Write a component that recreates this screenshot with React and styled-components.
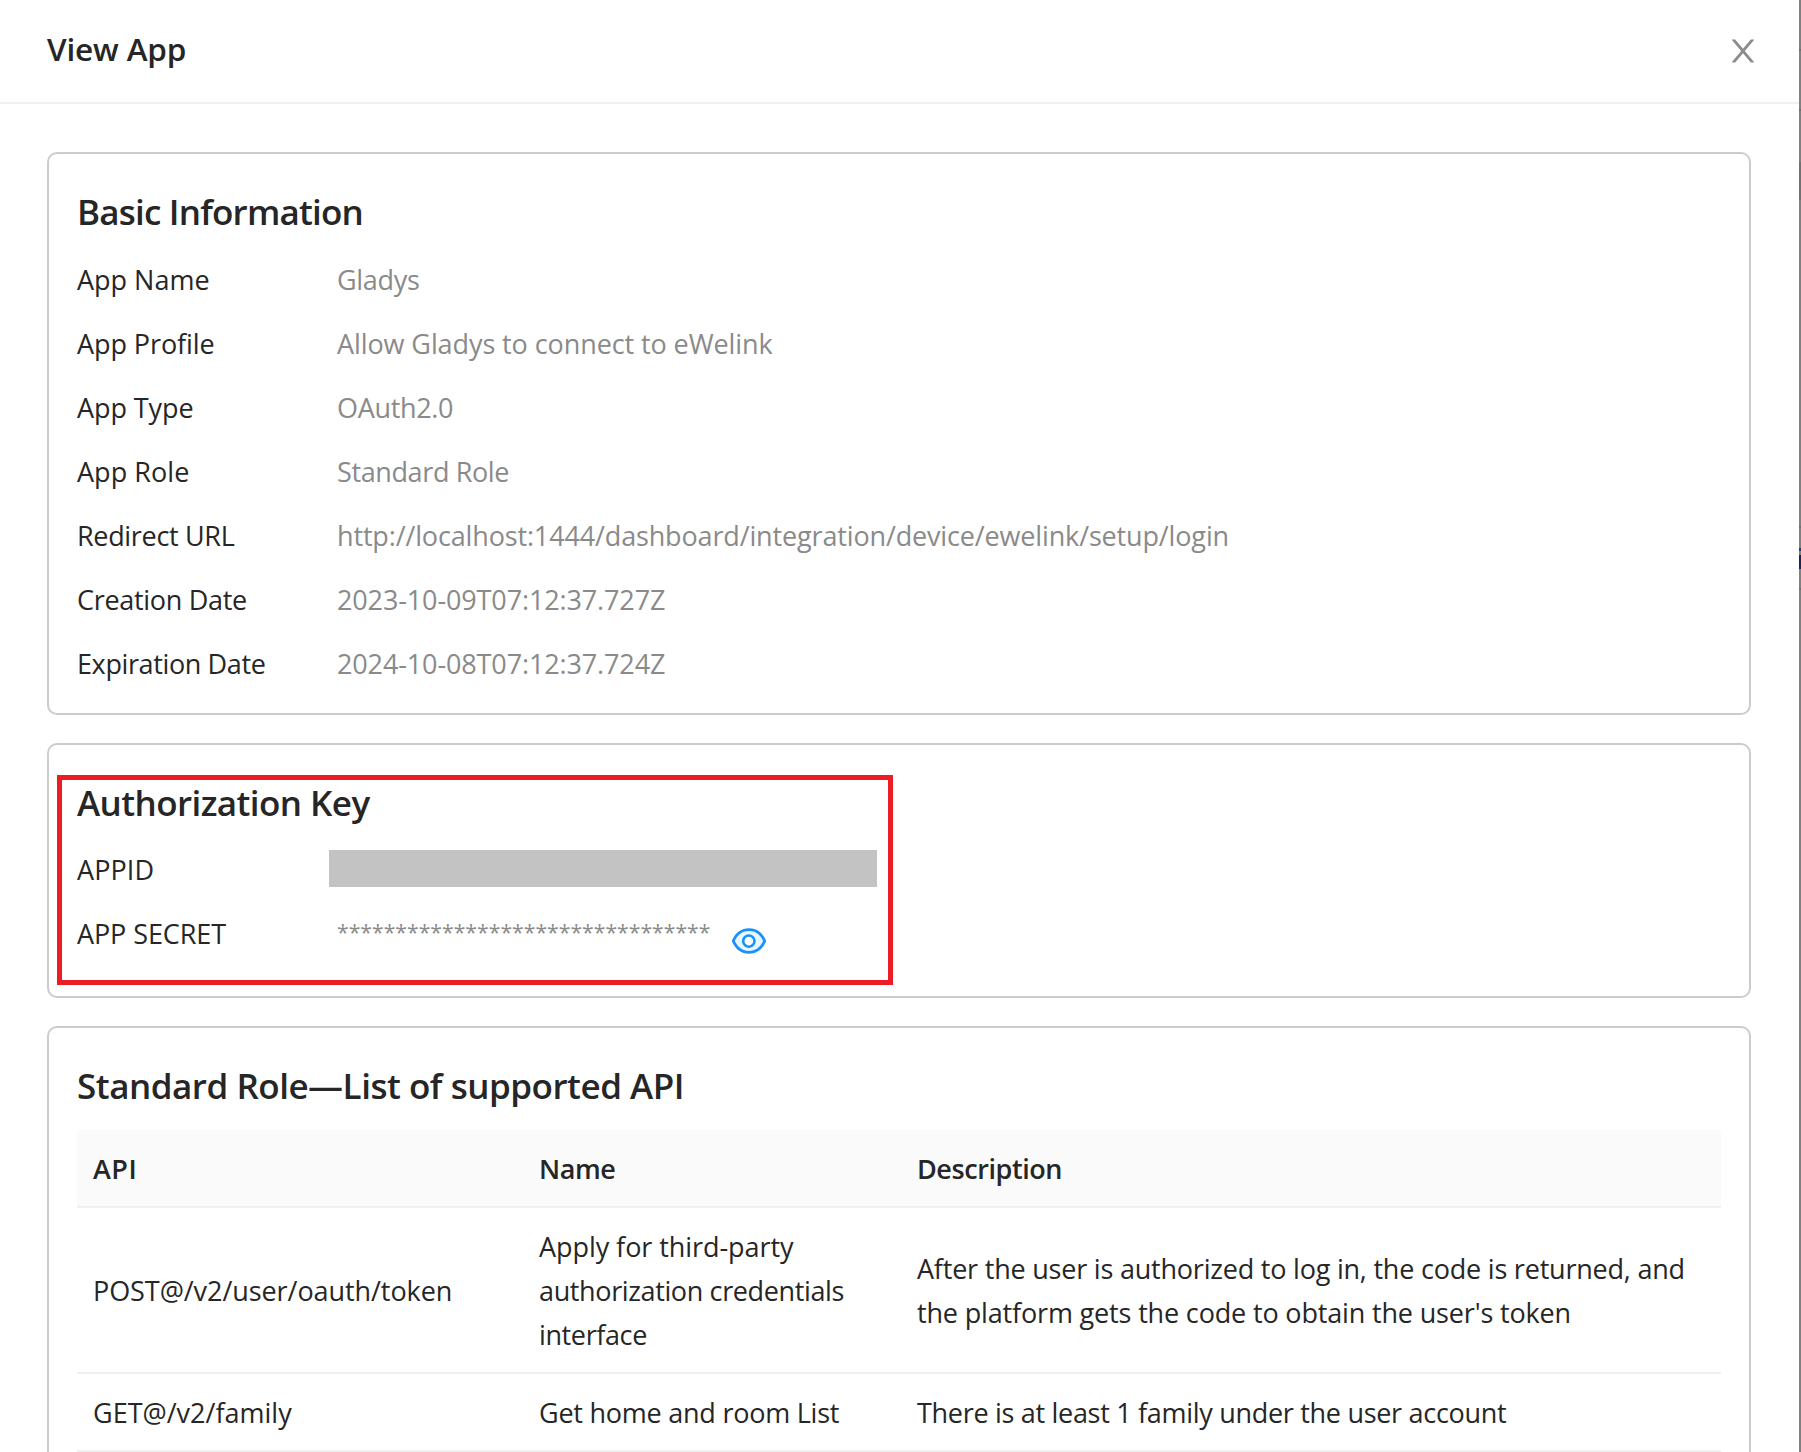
import React from "react";
import styled, { createGlobalStyle } from "styled-components";

const GlobalStyle = createGlobalStyle`
  *, *::before, *::after { box-sizing: border-box; }
  body {
    margin: 0;
    background: #fff;
    color: #262626;
    font-family: "Open Sans", "Noto Sans", sans-serif;
    font-size: 27px;
    line-height: 44px;
  }
`;

const Page = styled.div`
  display: flex;
  width: 100%;
  height: 1452px;
  overflow: hidden;
`;

const Drawer = styled.section`
  flex: 1;
  min-width: 0;
  display: flex;
  flex-direction: column;
  background: #fff;
`;

const Backdrop = styled.div`
  flex: none;
  width: 2px;
  background: linear-gradient(
    to bottom,
    #808080 0 49px, #6f6f6f 49px 51px,
    #808080 51px 109px, #6f6f6f 109px 111px,
    #808080 111px 162px, #717171 162px 200px,
    #808080 200px 526px, #717171 526px 528px,
    #808080 528px 548px, #1c4468 548px 551px,
    #808080 551px 555px, #1b2358 555px 569px,
    #808080 569px 588px, #717171 588px 590px,
    #808080 590px
  );
`;

const Header = styled.header`
  flex: none;
  display: flex;
  align-items: center;
  justify-content: space-between;
  height: 104px;
  padding: 0 38px 0 47px;
  border-bottom: 2px solid #f0f0f0;
`;

const Title = styled.h1`
  margin: 0;
  padding-bottom: 4px;
  font-size: 31.5px;
  font-weight: 600;
  letter-spacing: -0.15px;
`;

const CloseButton = styled.button`
  display: flex;
  padding: 0;
  border: 0;
  background: none;
  color: #8c8c8c;
`;

const Body = styled.main`
  display: flex;
  flex-direction: column;
  gap: 28px;
  padding: 48px 48px 0 47px;
`;

const Card = styled.section`
  position: relative;
  flex: none;
  height: ${(p) => p.$height}px;
  padding: 28px;
  border: 2px solid #ccc;
  border-radius: 10px;
`;

const Heading = styled.h2`
  margin: 0 0 ${(p) => p.$gap ?? 16}px;
  font-size: 35px;
  font-weight: 600;
  line-height: 59px;
  letter-spacing: ${(p) => p.$tracking}px;
`;

const Fields = styled.div`
  display: flex;
  flex-direction: column;
  gap: 20px;
`;

const Field = styled.div`
  display: flex;
  height: 44px;
`;

const Text = styled.span`
  display: block;
  white-space: nowrap;
  letter-spacing: ${(p) => p.$tracking ?? 0}px;
`;

const Label = styled(Text)`
  flex: none;
  width: 260px;
`;

const Value = styled(Text)`
  color: #8a8a8a;
`;

const Masked = styled(Value)`
  font-size: 21.2px;
  line-height: 40px;
`;

const Redacted = styled.div`
  width: 548px;
  height: 37px;
  margin: 2px 0 0 -8px;
  background: #c3c3c3;
`;

const EyeButton = styled.button`
  display: flex;
  height: 40px;
  margin: 9px 0 0 19px;
  padding: 0;
  border: 0;
  background: none;
`;

const Highlight = styled.div`
  position: absolute;
  left: 8px;
  top: 30px;
  width: 836px;
  height: 210px;
  border: 5px solid #ed1c24;
  pointer-events: none;
`;

const Table = styled.div`
  display: flex;
  flex-direction: column;
`;

const Row = styled.div`
  display: grid;
  grid-template-columns: 446px 378px 1fr;
  align-items: center;
  padding: 17px 0 15px;
  border-bottom: 2px solid #f0f0f0;
`;

const HeadRow = styled(Row)`
  background: #fafafa;
  border-radius: 4px 4px 0 0;
  font-weight: 600;
`;

const Cell = styled.div`
  padding: 0 16px;
`;

const basicInfo = [
  { label: "App Name", lt: 0, value: "Gladys", vt: -0.3 },
  { label: "App Profile", lt: -0.08, value: "Allow Gladys to connect to eWelink", vt: -0.09 },
  { label: "App Type", lt: -0.08, value: "OAuth2.0", vt: -0.32 },
  { label: "App Role", lt: 0.05, value: "Standard Role", vt: -0.38 },
  {
    label: "Redirect URL",
    lt: -0.33,
    value: "http://localhost:1444/dashboard/integration/device/ewelink/setup/login",
    vt: -0.15,
  },
  { label: "Creation Date", lt: -0.3, value: "2023-10-09T07:12:37.727Z", vt: -0.13 },
  { label: "Expiration Date", lt: -0.38, value: "2024-10-08T07:12:37.724Z", vt: -0.13 },
];

const columns = [["API", 0.5], ["Name", -0.4], ["Description", -0.42]];

const apis = [
  [
    [["POST@/v2/user/oauth/token", -0.07]],
    [["Apply for third-party", -0.06], ["authorization credentials", -0.37], ["interface", -0.38]],
    [
      ["After the user is authorized to log in, the code is returned, and", -0.21],
      ["the platform gets the code to obtain the user's token", -0.16],
    ],
  ],
  [
    [["GET@/v2/family", 0]],
    [["Get home and room List", -0.24]],
    [["There is at least 1 family under the user account", -0.3]],
  ],
];

function CloseIcon() {
  return (
    <svg width="36" height="36" viewBox="0 0 1024 1024" fill="currentColor" aria-hidden="true">
      <path d="M563.8 512l262.5-312.9c4.4-5.2.7-13.1-6.1-13.1h-79.8c-4.7 0-9.2 2.1-12.3 5.7L511.6 449.8 295.1 191.7c-3-3.6-7.5-5.7-12.3-5.7H203c-6.8 0-10.5 7.9-6.1 13.1L459.4 512 196.9 824.9A7.95 7.95 0 00203 838h79.8c4.7 0 9.2-2.1 12.3-5.7l216.5-258.1 216.5 258.1c3 3.6 7.5 5.7 12.3 5.7h79.8c6.8 0 10.5-7.9 6.1-13.1L563.8 512z" />
    </svg>
  );
}

function EyeIcon() {
  return (
    <svg width="40" height="40" viewBox="0 0 1024 1024" aria-hidden="true">
      <path
        fill="#e6f7ff"
        fillRule="evenodd"
        d="M149.3 512C232.6 684.2 350.7 766 512 766s279.4-81.8 362.7-254C791.4 339.8 673.3 258 512 258s-279.4 81.8-362.7 254zM508 336a176 176 0 110 352 176 176 0 010-352z"
      />
      <path
        fill="#1890ff"
        d="M942.2 486.2C847.4 286.5 704.1 186 512 186c-192.2 0-335.4 100.5-430.2 300.3a60.3 60.3 0 000 51.5C176.6 737.5 319.9 838 512 838c192.2 0 335.4-100.5 430.2-300.3 7.7-16.2 7.7-35 0-51.5zM512 766c-161.3 0-279.4-81.8-362.7-254C232.6 339.8 350.7 258 512 258c161.3 0 279.4 81.8 362.7 254C791.5 684.2 673.4 766 512 766zm-4-430c-97.2 0-176 78.8-176 176s78.8 176 176 176 176-78.8 176-176-78.8-176-176-176zm0 288c-61.9 0-112-50.1-112-112s50.1-112 112-112 112 50.1 112 112-50.1 112-112 112z"
      />
    </svg>
  );
}

export default function App() {
  return (
    <>
      <GlobalStyle />
      <Page>
        <Drawer>
          <Header>
            <Title>View App</Title>
            <CloseButton aria-label="Close">
              <CloseIcon />
            </CloseButton>
          </Header>
          <Body>
            <Card $height={563}>
              <Heading $tracking={-0.8} $gap={17}>
                Basic Information
              </Heading>
              <Fields>
                {basicInfo.map((f) => (
                  <Field key={f.label}>
                    <Label $tracking={f.lt}>{f.label}</Label>
                    <Value $tracking={f.vt}>{f.value}</Value>
                  </Field>
                ))}
              </Fields>
            </Card>

            <Card $height={255}>
              <Heading $tracking={-0.57}>Authorization Key</Heading>
              <Fields>
                <Field>
                  <Label $tracking={0.1}>APPID</Label>
                  <Redacted />
                </Field>
                <Field>
                  <Label $tracking={-0.1}>APP SECRET</Label>
                  <Masked>{"*".repeat(32)}</Masked>
                  <EyeButton aria-label="Show secret">
                    <EyeIcon />
                  </EyeButton>
                </Field>
              </Fields>
              <Highlight />
            </Card>

            <Card $height={480}>
              <Heading $tracking={-0.48} $gap={15}>
                Standard Role—List of supported API
              </Heading>
              <Table>
                <HeadRow>
                  {columns.map(([name, tracking]) => (
                    <Cell key={name}>
                      <Text $tracking={tracking}>{name}</Text>
                    </Cell>
                  ))}
                </HeadRow>
                {apis.map((cells, r) => (
                  <Row key={r}>
                    {cells.map((lines, c) => (
                      <Cell key={c}>
                        {lines.map(([line, tracking]) => (
                          <Text key={line} $tracking={tracking}>
                            {line}
                          </Text>
                        ))}
                      </Cell>
                    ))}
                  </Row>
                ))}
              </Table>
            </Card>
          </Body>
        </Drawer>
        <Backdrop />
      </Page>
    </>
  );
}
